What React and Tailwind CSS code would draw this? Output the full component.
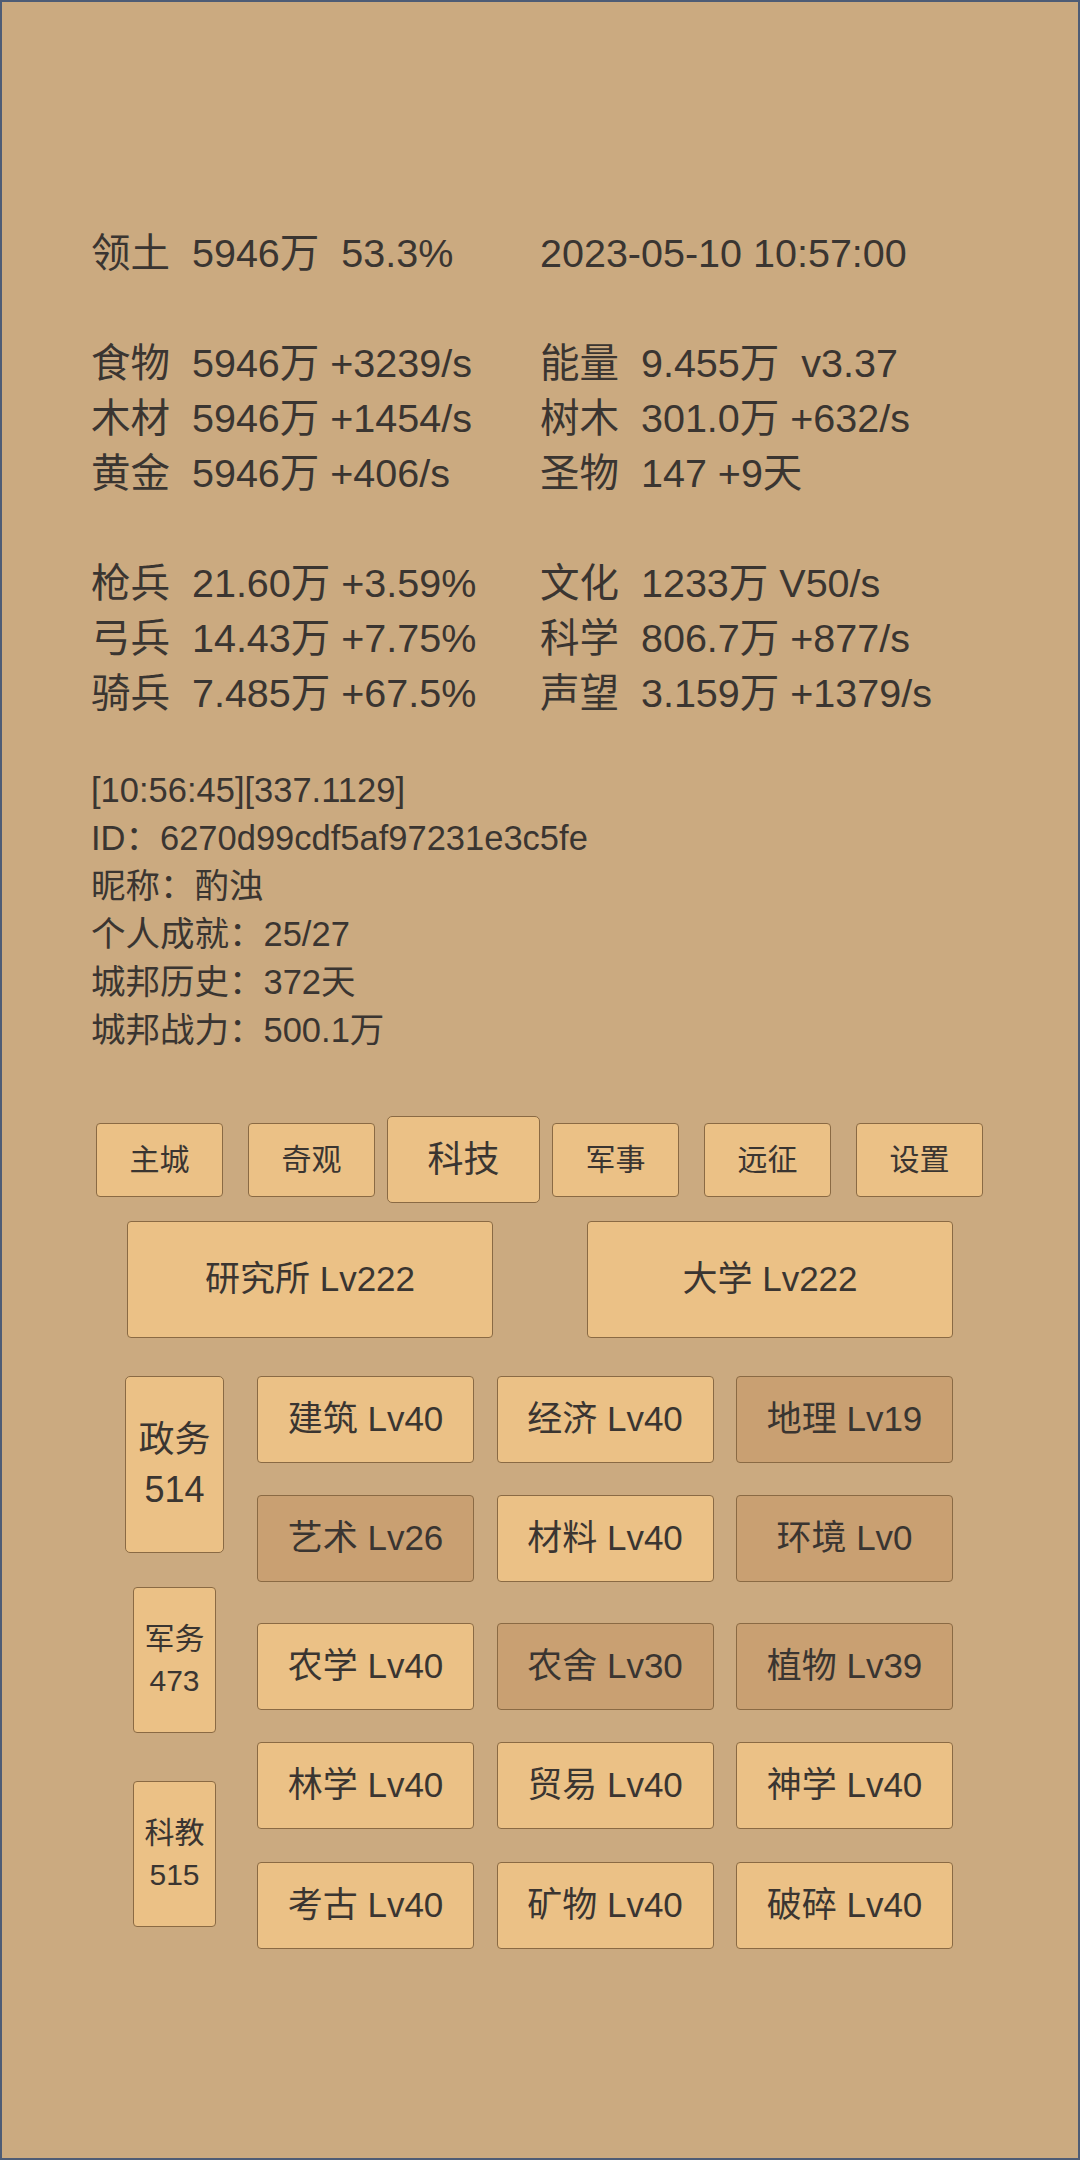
const FONT = "font-['Liberation_Sans','Noto_Sans_CJK_SC',sans-serif]";

const LEFT_STATS = [
  "领土  5946万  53.3%",
  "",
  "食物  5946万 +3239/s",
  "木材  5946万 +1454/s",
  "黄金  5946万 +406/s",
  "",
  "枪兵  21.60万 +3.59%",
  "弓兵  14.43万 +7.75%",
  "骑兵  7.485万 +67.5%",
];

const RIGHT_STATS = [
  "2023-05-10 10:57:00",
  "",
  "能量  9.455万  v3.37",
  "树木  301.0万 +632/s",
  "圣物  147 +9天",
  "",
  "文化  1233万 V50/s",
  "科学  806.7万 +877/s",
  "声望  3.159万 +1379/s",
];

const INFO = [
  "[10:56:45][337.1129]",
  "ID：6270d99cdf5af97231e3c5fe",
  "昵称：酌浊",
  "个人成就：25/27",
  "城邦历史：372天",
  "城邦战力：500.1万",
];

const TABS = [
  { label: "主城", ml: "" },
  { label: "奇观", ml: "ml-[25px]" },
  { label: "科技", ml: "ml-[12px]", active: true },
  { label: "军事", ml: "ml-[12px]" },
  { label: "远征", ml: "ml-[25px]" },
  { label: "设置", ml: "ml-[25px]" },
];

const GROUPS = [
  { name: "政务", count: 514, active: true, mt: "" },
  { name: "军务", count: 473, mt: "mt-[34px]" },
  { name: "科教", count: 515, mt: "mt-[48px]" },
];

// dark = 未满级
const TECH_ROWS = [
  {
    mt: "",
    items: [
      ["建筑 Lv40", false],
      ["经济 Lv40", false],
      ["地理 Lv19", true],
    ],
  },
  {
    mt: "mt-[32px]",
    items: [
      ["艺术 Lv26", true],
      ["材料 Lv40", false],
      ["环境 Lv0", true],
    ],
  },
  {
    mt: "mt-[41px]",
    items: [
      ["农学 Lv40", false],
      ["农舍 Lv30", true],
      ["植物 Lv39", true],
    ],
  },
  {
    mt: "mt-[32px]",
    items: [
      ["林学 Lv40", false],
      ["贸易 Lv40", false],
      ["神学 Lv40", false],
    ],
  },
  {
    mt: "mt-[33px]",
    items: [
      ["考古 Lv40", false],
      ["矿物 Lv40", false],
      ["破碎 Lv40", false],
    ],
  },
];

function StatColumn({ lines }) {
  return (
    <div className="flex flex-col">
      {lines.map((line, i) => (
        <div key={i} className="h-[55px] whitespace-pre text-[39.5px] leading-[55px]">
          {line}
        </div>
      ))}
    </div>
  );
}

function Tab({ label, active, ml }) {
  const size = active
    ? "h-[87px] w-[153px] text-[36px] rounded-[5px]"
    : "h-[74px] w-[127px] text-[30px] rounded-[4px]";
  return (
    <div
      className={`flex shrink-0 items-center justify-center border border-[#8a6a44] bg-[#ebc186] ${size} ${ml}`}
    >
      {label}
    </div>
  );
}

function GroupButton({ name, count, active, mt }) {
  const size = active
    ? "h-[177px] w-[99px] text-[36px] leading-[50px] rounded-[5px]"
    : "h-[146px] w-[83px] text-[30px] leading-[42px] rounded-[4px]";
  return (
    <div
      className={`flex flex-col items-center justify-center border border-[#8a6a44] bg-[#ebc186] ${size} ${mt}`}
    >
      <span>{name}</span>
      <span>{count}</span>
    </div>
  );
}

function TechButton({ label, dark }) {
  return (
    <div
      className={`flex h-[87px] w-[217px] items-center justify-center rounded-[4px] border border-[#8a6a44] text-[35px] ${
        dark ? "bg-[#c9a072]" : "bg-[#ebc186]"
      }`}
    >
      {label}
    </div>
  );
}

export default function App() {
  return (
    <div
      className={`box-border h-[2160px] w-[1080px] overflow-hidden border-2 border-[#4e5c75] bg-[#cbaa80] text-[#3a3531] ${FONT}`}
    >
      <div className="grid grid-cols-[449px_1fr] pl-[89px] pt-[224px]">
        <StatColumn lines={LEFT_STATS} />
        <StatColumn lines={RIGHT_STATS} />
      </div>

      <div className="mt-[45px] flex flex-col pl-[89px]">
        {INFO.map((line) => (
          <div key={line} className="h-[48px] whitespace-pre text-[34.5px] leading-[48px]">
            {line}
          </div>
        ))}
      </div>

      <div className="mt-[62px] flex h-[87px] items-center pl-[94px]">
        {TABS.map((t) => (
          <Tab key={t.label} {...t} />
        ))}
      </div>

      <div className="mt-[18px] flex gap-[94px] pl-[125px]">
        <div className="flex h-[117px] w-[366px] items-center justify-center rounded-[4px] border border-[#8a6a44] bg-[#ebc186] text-[35px]">
          研究所 Lv222
        </div>
        <div className="flex h-[117px] w-[366px] items-center justify-center rounded-[4px] border border-[#8a6a44] bg-[#ebc186] text-[35px]">
          大学 Lv222
        </div>
      </div>

      <div className="mt-[38px] flex gap-[33px] pl-[123px]">
        <div className="flex w-[99px] flex-col items-center">
          {GROUPS.map((g) => (
            <GroupButton key={g.name} {...g} />
          ))}
        </div>
        <div className="flex flex-col">
          {TECH_ROWS.map((row, i) => (
            <div key={i} className={`flex gap-[22.5px] ${row.mt}`}>
              {row.items.map(([label, dark]) => (
                <TechButton key={label} label={label} dark={dark} />
              ))}
            </div>
          ))}
        </div>
      </div>
    </div>
  );
}
